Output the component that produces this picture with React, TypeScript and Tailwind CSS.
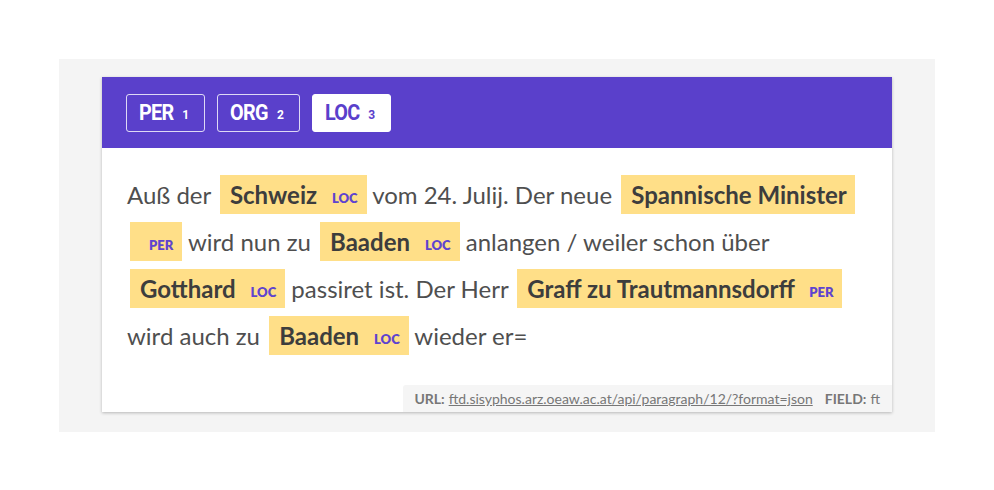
import React from "react";

type Part = string | { text: string; label: string };

const parts: Part[] = [
  "Auß der ",
  { text: "Schweiz", label: "LOC" },
  " vom 24. Julij. Der neue ",
  { text: "Spannische Minister", label: "PER" },
  " wird nun zu ",
  { text: "Baaden", label: "LOC" },
  " anlangen / weiler schon über ",
  { text: "Gotthard", label: "LOC" },
  " passiret ist. Der Herr ",
  { text: "Graff zu Trautmannsdorff", label: "PER" },
  " wird auch zu ",
  { text: "Baaden", label: "LOC" },
  " wieder er=",
];

const tabs = [
  { name: "PER", count: 1, active: false },
  { name: "ORG", count: 2, active: false },
  { name: "LOC", count: 3, active: true },
];

function Mark({ text, label }: { text: string; label: string }) {
  return (
    <mark className="bg-[#ffdf88] text-[#3d3d3d] font-bold pl-[10px] pr-[9px] py-[5px] ml-[3px] box-decoration-clone">
      {text}{" "}
      <span className="ml-[9px] text-[13px] leading-none font-extrabold text-[#5f44cf] uppercase relative -top-[1px]">
        {label}
      </span>
    </mark>
  );
}

export default function App() {
  return (
    <div className="w-[994px] h-[490px] bg-white pt-[59px] font-['Lato',sans-serif]">
      <div className="mx-auto w-[876px] bg-[#f4f4f4] pt-[18px] pb-[20px] px-[43px]">
        <div className="bg-white shadow-[0_1px_3px_rgba(0,0,0,0.25)]">
          {/* entity tabs */}
          <div className="h-[71px] bg-[#5a40cb] flex items-center gap-[12px] pl-[24px]">
            {tabs.map((t) => (
              <div
                key={t.name}
                className={`h-[38px] flex items-center pl-[12px] pr-[15px] rounded-[3px] border font-['Roboto',sans-serif] font-bold ${
                  t.active
                    ? "bg-white border-white text-[#5a40cb]"
                    : "border-white/80 text-white"
                }`}
              >
                <span className="text-[22px] tracking-[-0.8px] scale-x-[0.9] origin-left inline-block -mr-[3px]">{t.name}</span>
                <span className="text-[12px] ml-[8px] mt-[5px]">{t.count}</span>
              </div>
            ))}
          </div>

          {/* annotated paragraph */}
          <div className="pt-[23px] pl-[25px] pr-[24px]">
            <p className="text-[24px] leading-[47px] text-[#4f4f4f]">
              {parts.map((p, i) =>
                typeof p === "string" ? (
                  <React.Fragment key={i}>{p}</React.Fragment>
                ) : (
                  <Mark key={i} text={p.text} label={p.label} />
                )
              )}
            </p>
          </div>

          <div className="flex justify-end mt-[26px]">
            <div className="bg-[#f5f5f5] h-[27px] pl-[11px] pr-[12px] flex items-center text-[14px] text-[#777] rounded-tl-[3px]">
              <span className="font-bold mr-[4px]">URL:</span>
              <span className="underline">ftd.sisyphos.arz.oeaw.ac.at/api/paragraph/12/?format=json</span>
              <span className="font-bold ml-[12px] mr-[4px]">FIELD:</span>
              <span>ft</span>
            </div>
          </div>
        </div>
      </div>
    </div>
  );
}
